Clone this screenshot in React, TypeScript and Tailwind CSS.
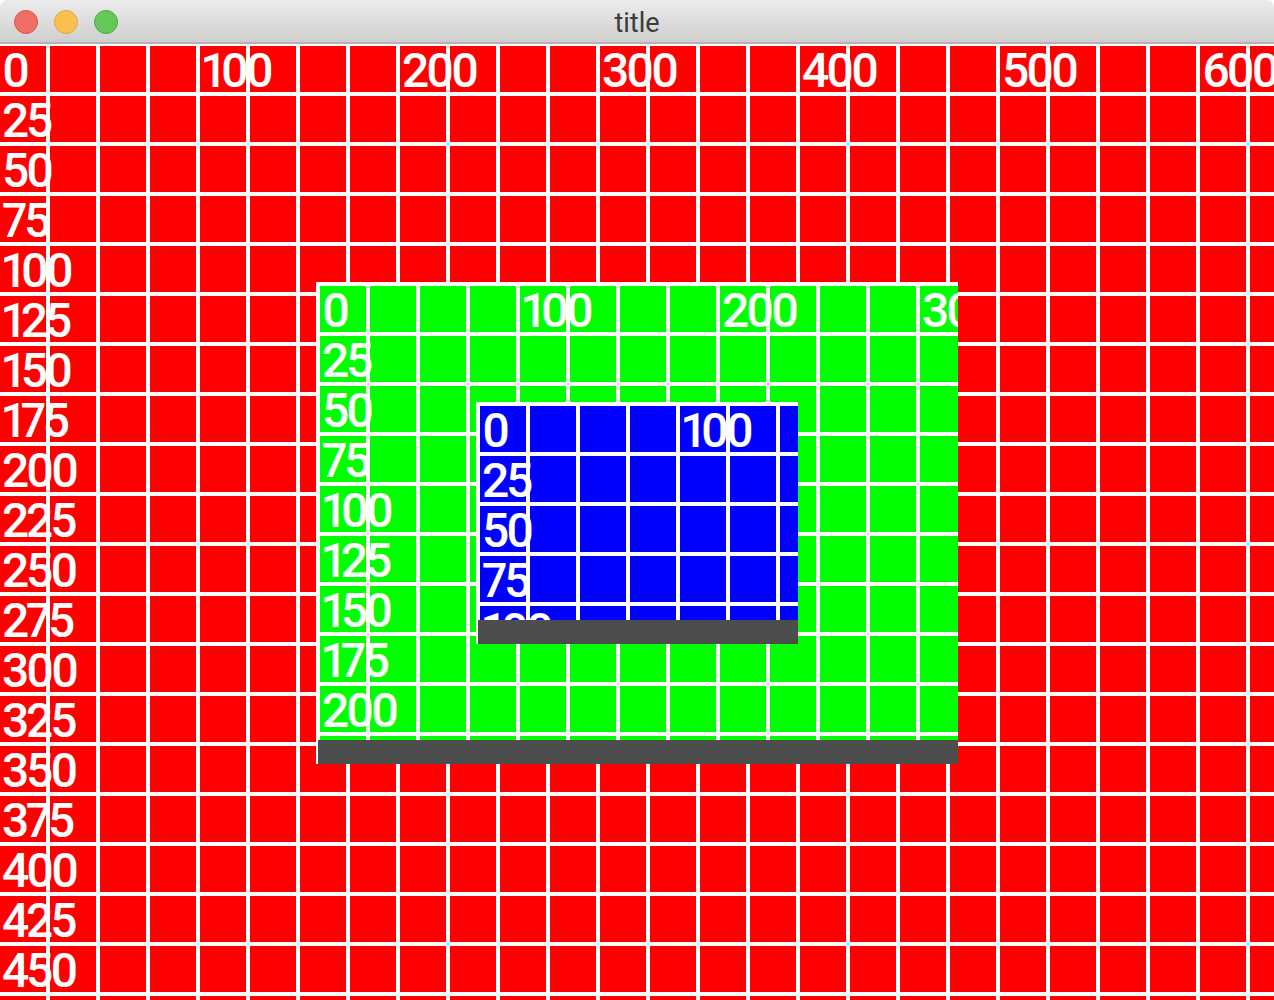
const Tile = ({ label, className }: { label?: number; className: string }) => (
  <div className={`box-border h-[50px] w-[50px] whitespace-nowrap border-r-4 border-b-4 border-white pl-[2px] pt-[2px] text-[48px] font-medium leading-[46px] tracking-[-3.2px] text-white proportional-nums ${className}`}>
    {label !== undefined && <span className="relative">{label}</span>}
  </div>
);

const TileGrid = ({ cols, rows, gridClass, tileClass }: { cols: number; rows: number; gridClass: string; tileClass: string }) => {
  const tiles = [];
  for (let r = 0; r < rows; r++) {
    for (let c = 0; c < cols; c++) {
      let label: number | undefined;
      if (r === 0 && c % 4 === 0) label = c * 25;
      else if (c === 0) label = r * 25;
      tiles.push(<Tile key={`${r}-${c}`} label={label} className={tileClass} />);
    }
  }
  return <div className={`grid w-max ${gridClass}`}>{tiles}</div>;
};

const TrafficLight = ({ className }: { className: string }) => (
  <div className={`box-border h-6 w-6 rounded-full border ${className}`} />
);

export default function App() {
  return (
    <div className="relative h-[1000px] w-[1274px] overflow-hidden bg-white font-['Roboto',sans-serif]">
      <header className="relative box-border flex h-11 items-center gap-4 rounded-t-[7px] border-b-2 border-[#b4b4b4] bg-gradient-to-b from-[#ececec] to-[#cfcfcf] pl-[14px] pt-[2px]">
        <TrafficLight className="border-[#d9534b] bg-[#ef6e65]" />
        <TrafficLight className="border-[#dfa63f] bg-[#fabf4f]" />
        <TrafficLight className="border-[#4fa845] bg-[#64c957]" />
        <div className="absolute inset-x-0 top-0 flex h-[46px] items-center justify-center text-[27px] text-[#3c3c3c]">title</div>
      </header>
      <main className="h-[956px] overflow-hidden pt-[2px]">
        <TileGrid cols={26} rows={20} gridClass="grid-cols-[repeat(26,50px)]" tileClass="bg-[#ff0000]" />
      </main>
      <section className="absolute left-[316px] top-[282px] flex h-[482px] w-[642px] flex-col">
        <div className="min-h-0 flex-1 overflow-hidden bg-white pl-1 pt-1">
          <TileGrid cols={13} rows={10} gridClass="grid-cols-[repeat(13,50px)]" tileClass="bg-[#00ff00]" />
        </div>
        <div className="flex h-6">
          <div className="w-[2px] bg-white" />
          <div className="flex-1 bg-[#4d4d4d]" />
        </div>
        <section className="absolute left-[160px] top-[120px] flex h-[242px] w-[322px] flex-col">
          <div className="min-h-0 flex-1 overflow-hidden bg-white pl-1 pt-1">
            <TileGrid cols={7} rows={5} gridClass="grid-cols-[repeat(7,50px)]" tileClass="bg-[#0000ff]" />
          </div>
          <div className="flex h-6">
            <div className="w-[2px] bg-white" />
            <div className="flex-1 bg-[#4d4d4d]" />
          </div>
        </section>
      </section>
    </div>
  );
}
